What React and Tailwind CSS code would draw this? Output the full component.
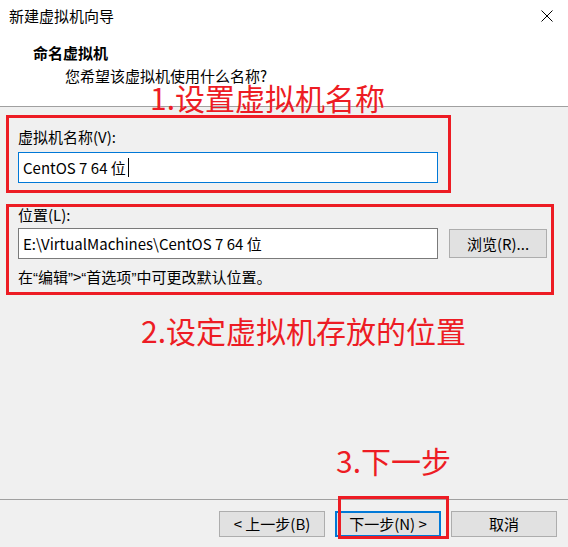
export default function App() {
  const q = "font-['Liberation_Sans',sans-serif]";
  return (
    <div className="w-[568px] h-[547px] bg-[#f0f0f0] flex flex-col font-['Noto_Sans_CJK_SC',sans-serif] text-[15px] text-black overflow-hidden">
      {/* header */}
      <div className="relative h-[107px] bg-white border-b border-[#a0a0a0] shrink-0">
        <div className="flex items-start justify-between">
          <div className="pl-[9px] pt-[5px] leading-[22px]">新建虚拟机向导</div>
          <svg className="mr-[15px] mt-[10px]" width="12" height="12" viewBox="0 0 12 12">
            <path d="M0.5 0.5L11.5 11.5M11.5 0.5L0.5 11.5" stroke="#000" strokeWidth="1" fill="none" />
          </svg>
        </div>
        <div className="pl-[33px] mt-[16px] font-bold leading-[20px]">命名虚拟机</div>
        <div className="pl-[65px] mt-[3px] leading-[20px]">您希望该虚拟机使用什么名称?</div>
        <div className="absolute left-[150px] top-[82px] text-[30px] leading-none text-[#ed1c24] whitespace-nowrap">1.设置虚拟机名称</div>
      </div>

      {/* name box */}
      <div className="ml-[6px] mt-[8px] w-[445px] h-[78px] border-[3px] border-[#ed1c24] pl-[9px] pt-[9px] shrink-0">
        <div className="leading-[20px]">虚拟机名称(V):</div>
        <div className="mt-[5px] w-[420px] h-[31px] border border-[#0078d7] bg-white flex items-center pl-[4px] leading-[20px]">
          <span className="whitespace-pre">CentOS 7 64 位</span>
          <span className="inline-block w-px h-[19px] bg-black ml-[2px]"></span>
        </div>
      </div>

      {/* location box */}
      <div className="ml-[6px] mt-[11px] w-[548px] h-[91px] border-[3px] border-[#ed1c24] pl-[9px] shrink-0">
        <div className="leading-[15px]">位置(L):</div>
        <div className="mt-[6px] flex items-center">
          <div className="w-[420px] h-[31px] border border-[#7a7a7a] bg-white flex items-center pl-[4px] leading-[20px]">
            E:\VirtualMachines\CentOS 7 64 位
          </div>
          <div className="ml-[11px] w-[98px] h-[29px] bg-[#e1e1e1] border border-[#adadad] flex items-center justify-center leading-[20px]">
            浏览(R)...
          </div>
        </div>
        <div className="mt-[8px] leading-[20px]">
          在<span className={q}>“</span>编辑<span className={q}>”</span>&gt;<span className={q}>“</span>首选项<span className={q}>”</span>中可更改默认位置。
        </div>
      </div>

      <div className="ml-[141px] mt-[20px] text-[30px] leading-none text-[#ed1c24] whitespace-nowrap shrink-0">2.设定虚拟机存放的位置</div>

      <div className="flex-1"></div>

      <div className="ml-[336px] mb-[24px] text-[30px] leading-none text-[#ed1c24] whitespace-nowrap shrink-0">3.下一步</div>

      {/* footer */}
      <div className="border-t border-[#a0a0a0] pt-[11px] pb-[10px] flex justify-end gap-[10px] pr-[11px] shrink-0">
        <div className="w-[106px] h-[26px] bg-[#e1e1e1] border border-[#adadad] flex items-center justify-center leading-[20px]">
          &lt; 上一步(B)
        </div>
        <div className="relative w-[106px] h-[26px] bg-[#e1e1e1] border-2 border-[#0078d7] flex items-center justify-center leading-[20px]">
          下一步(N) &gt;
          <div className="absolute -top-[17px] left-[1px] w-[111px] h-[43px] border-[3px] border-[#ed1c24] pointer-events-none"></div>
        </div>
        <div className="w-[106px] h-[26px] bg-[#e1e1e1] border border-[#adadad] flex items-center justify-center leading-[20px]">
          取消
        </div>
      </div>
    </div>
  );
}
